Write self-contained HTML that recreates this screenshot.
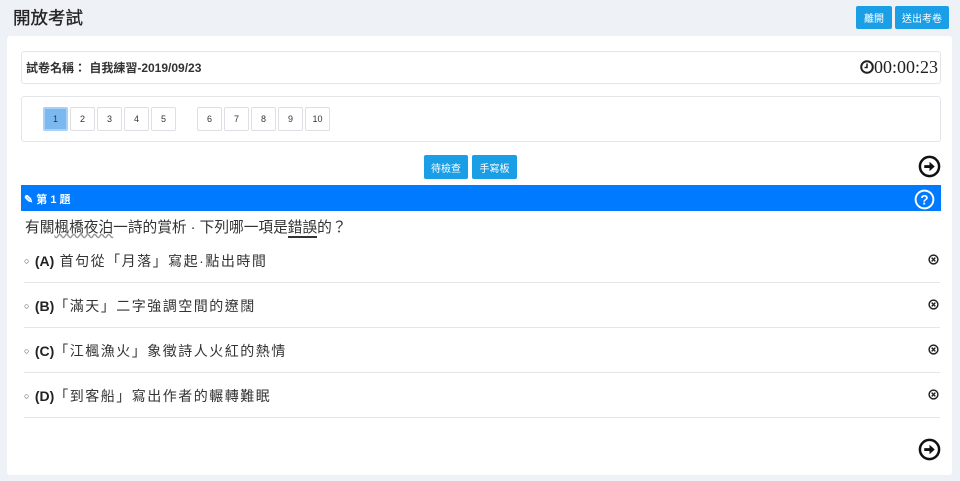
<!DOCTYPE html>
<html><head><meta charset="utf-8"><style>
*{box-sizing:border-box;margin:0;padding:0}
body{width:960px;height:481px;background:#eef1f5;font-family:"Liberation Sans","Noto Sans CJK TC",sans-serif;position:relative;overflow:hidden;color:#222}
.abs{position:absolute}
.btn{position:absolute;background:#1a9ee6;color:#fff;font-size:10px;border-radius:2px;display:flex;align-items:center;justify-content:center}
.card{left:7px;top:36px;width:945px;height:439px;background:#fff;border-radius:3px}
.box{border:1px solid #e3e5e8;border-radius:3px;background:#fff}
.pg{position:absolute;top:107px;width:25px;height:24px;border:1px solid #dcdfe3;border-radius:2px;font-size:9px;display:flex;align-items:center;justify-content:center;color:#333;background:#fff}
.opt{position:absolute;left:24px;font-size:14px;color:#333;letter-spacing:1.5px;white-space:nowrap}
.opt b{font-weight:bold;color:#222;letter-spacing:0}
.opt i{font-style:normal;font-size:9px;letter-spacing:0;vertical-align:2px}
.line{position:absolute;left:24px;width:916px;height:1px;background:#e6e6e6}
.x{position:absolute;left:928px}
</style></head><body>
<div class="abs" style="left:13px;top:5px;font-size:17.5px;color:#222;-webkit-text-stroke:0.3px #222">開放考試</div>
<div class="btn" style="left:856px;top:6px;width:36px;height:23px">離開</div>
<div class="btn" style="left:895px;top:6px;width:54px;height:23px">送出考卷</div>
<div class="abs card"></div>
<div class="abs box" style="left:21px;top:51px;width:920px;height:33px"></div>
<div class="abs" style="left:26px;top:59px;font-size:12px;font-weight:bold;color:#333">試卷名稱： 自我練習-2019/09/23</div>
<svg class="abs" style="left:860px;top:60px" width="14" height="14" viewBox="0 0 14 14"><circle cx="7" cy="7" r="5.8" fill="none" stroke="#222" stroke-width="2"/><path d="M7 3.5V7.5H4.5" fill="none" stroke="#222" stroke-width="1.6"/></svg>
<div class="abs" style="left:874px;top:57px;font-family:'Liberation Serif',serif;font-size:18px;color:#222">00:00:23</div>
<div class="abs box" style="left:21px;top:96px;width:920px;height:46px"></div>
<div class="pg" style="left:43px;background:#7bb8f0;border:2px solid #a9d0f7">1</div>
<div class="pg" style="left:70px">2</div><div class="pg" style="left:97px">3</div><div class="pg" style="left:124px">4</div><div class="pg" style="left:151px">5</div>
<div class="pg" style="left:197px">6</div><div class="pg" style="left:224px">7</div><div class="pg" style="left:251px">8</div><div class="pg" style="left:278px">9</div><div class="pg" style="left:305px">10</div>
<div class="btn" style="left:424px;top:155px;width:44px;height:24px">待檢查</div>
<div class="btn" style="left:472px;top:155px;width:45px;height:24px">手寫板</div>
<svg class="abs" style="left:918px;top:155px" width="23" height="23" viewBox="0 0 24 24"><circle cx="12" cy="12" r="10" fill="none" stroke="#111" stroke-width="2.6"/><path d="M6.5 10.5h5.5v-3.5l5.5 5-5.5 5v-3.5h-5.5z" fill="#111"/></svg>
<div class="abs" style="left:21px;top:185px;width:920px;height:26px;background:#007bff"></div>
<div class="abs" style="left:24px;top:191px;font-size:11px;color:#fff;font-weight:bold">✎ 第 1 題</div>
<svg class="abs" style="left:914px;top:189px" width="21" height="21" viewBox="0 0 22 22"><circle cx="11" cy="11" r="9.3" fill="none" stroke="#fff" stroke-width="2"/><text x="11" y="16" text-anchor="middle" font-family="Liberation Sans" font-weight="bold" font-size="14" fill="#fff">?</text></svg>
<div class="abs" style="left:25px;top:216px;font-size:14.7px;color:#333;white-space:nowrap">有關<span style="text-decoration:underline wavy #999">楓橋夜泊</span>一詩的賞析 · 下列哪一項是<span style="border-bottom:2px solid #333">錯誤</span>的？</div>
<div class="opt" style="top:251px"><i>○</i> <b>(A)</b> 首句從「月落」寫起·點出時間</div>
<div class="line" style="top:282px"></div>
<div class="opt" style="top:296px"><i>○</i> <b>(B)</b>「滿天」二字強調空間的遼闊</div>
<div class="line" style="top:327px"></div>
<div class="opt" style="top:341px"><i>○</i> <b>(C)</b>「江楓漁火」象徵詩人火紅的熱情</div>
<div class="line" style="top:372px"></div>
<div class="opt" style="top:386px"><i>○</i> <b>(D)</b>「到客船」寫出作者的輾轉難眠</div>
<div class="line" style="top:417px"></div>
<svg class="x" style="top:254px" width="11" height="11" viewBox="0 0 12 12"><circle cx="6" cy="6" r="4.8" fill="none" stroke="#222" stroke-width="1.6"/><path d="M4 4l4 4M8 4l-4 4" stroke="#222" stroke-width="1.5"/></svg>
<svg class="x" style="top:299px" width="11" height="11" viewBox="0 0 12 12"><circle cx="6" cy="6" r="4.8" fill="none" stroke="#222" stroke-width="1.6"/><path d="M4 4l4 4M8 4l-4 4" stroke="#222" stroke-width="1.5"/></svg>
<svg class="x" style="top:344px" width="11" height="11" viewBox="0 0 12 12"><circle cx="6" cy="6" r="4.8" fill="none" stroke="#222" stroke-width="1.6"/><path d="M4 4l4 4M8 4l-4 4" stroke="#222" stroke-width="1.5"/></svg>
<svg class="x" style="top:389px" width="11" height="11" viewBox="0 0 12 12"><circle cx="6" cy="6" r="4.8" fill="none" stroke="#222" stroke-width="1.6"/><path d="M4 4l4 4M8 4l-4 4" stroke="#222" stroke-width="1.5"/></svg>
<svg class="abs" style="left:918px;top:438px" width="23" height="23" viewBox="0 0 24 24"><circle cx="12" cy="12" r="10" fill="none" stroke="#111" stroke-width="2.6"/><path d="M6.5 10.5h5.5v-3.5l5.5 5-5.5 5v-3.5h-5.5z" fill="#111"/></svg>
</body></html>
